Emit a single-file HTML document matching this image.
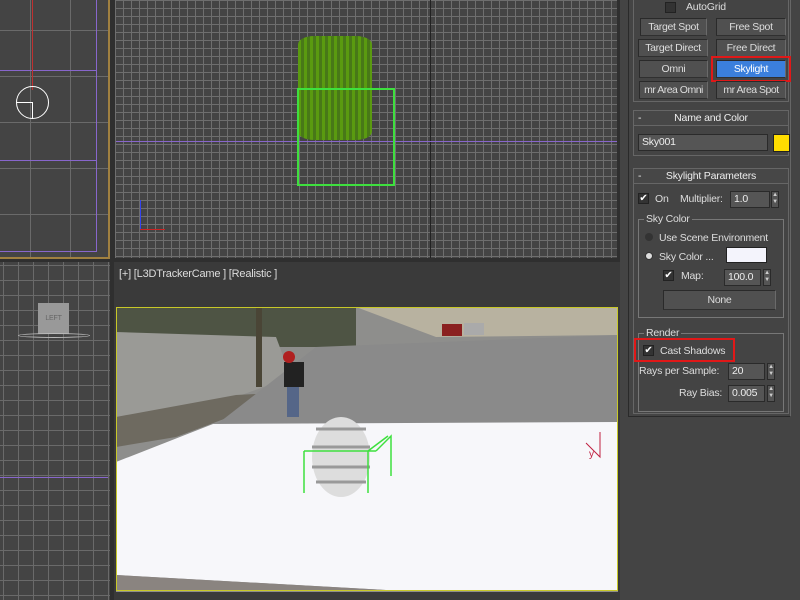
<!DOCTYPE html>
<html><head><style>
*{margin:0;padding:0;box-sizing:border-box}
body{width:800px;height:600px;overflow:hidden;background:#2f2f2f;font-family:"Liberation Sans",sans-serif;font-size:10.5px;letter-spacing:-0.2px;color:#ddd;position:relative;white-space:nowrap}
.a{position:absolute}
.grid{background-color:#444;background-image:linear-gradient(#6a6a6a 1px,transparent 1px),linear-gradient(90deg,#6a6a6a 1px,transparent 1px)}
.btn{position:absolute;height:18px;background:#505050;border:1px solid #2a2a2a;border-right-color:#6a6a6a;border-bottom-color:#303030;text-align:center;line-height:16px;color:#ddd;font-size:10.5px;letter-spacing:-0.3px;overflow:hidden}
.hdr{position:absolute;left:633px;width:156px;height:16px;border:1px solid #666;background:#474747;text-align:center;line-height:14px;color:#eee}
.hdr b{position:absolute;left:4px;font-weight:normal}
.fld{position:absolute;background:#555;border:1px solid #2a2a2a;height:17px;line-height:15px;padding-left:3px;color:#eee}
.cb{position:absolute;width:11px;height:11px;background:#333;border:1px solid #222;color:#fff;font-size:10px;line-height:9px;text-align:center}
.spin{position:absolute;width:8px;height:17px;background:#555;border:1px solid #2a2a2a;font-size:6px;line-height:7px;text-align:center;color:#ccc}
.grp{position:absolute;border:1px solid #777}
</style></head><body>
<!-- left top viewport -->
<div class="a grid" style="left:0;top:0;width:110px;height:259px;background-size:100% 46px,40px 100%;background-position:0 30px,-10px 0;border-right:2px solid #a08040;border-bottom:2px solid #a08040"></div>
<div class="a" style="left:0;top:70px;width:97px;height:1px;background:#8866cc"></div>
<div class="a" style="left:0;top:160px;width:97px;height:1px;background:#8866cc"></div>
<div class="a" style="left:96px;top:0;width:1px;height:252px;background:#8866cc"></div>
<div class="a" style="left:0;top:251px;width:97px;height:1px;background:#8866cc"></div>
<div class="a" style="left:32px;top:0;width:1px;height:90px;background:#c03030"></div>
<div class="a" style="left:16px;top:86px;width:33px;height:33px;border:1px solid #fff;border-radius:50%"></div>
<div class="a" style="left:32px;top:102px;width:1px;height:17px;background:#fff"></div>
<div class="a" style="left:17px;top:102px;width:16px;height:1px;background:#fff"></div>
<!-- top viewport -->
<div class="a grid" style="left:115px;top:0;width:502px;height:258px;background-size:8px 8px;background-image:linear-gradient(#6e6e6e 1px,transparent 1px),linear-gradient(90deg,#6e6e6e 1px,transparent 1px)"></div>
<div class="a" style="left:430px;top:0;width:1px;height:258px;background:#222"></div>
<div class="a" style="left:116px;top:141px;width:501px;height:1px;background:#8866cc"></div>
<div class="a" style="left:298px;top:36px;width:74px;height:104px;background:repeating-linear-gradient(90deg,#5a9a10 0 3px,#487818 3px 6px),#5a9a10;border-radius:22%/8%"></div>
<div class="a" style="left:297px;top:88px;width:98px;height:98px;border:2px solid #3ee03e"></div>
<div class="a" style="left:140px;top:200px;width:1px;height:30px;background:#3344ee"></div>
<div class="a" style="left:140px;top:229px;width:25px;height:1px;background:#cc2222"></div>
<!-- lower left viewport -->
<div class="a grid" style="left:0;top:262px;width:110px;height:338px;background-size:15px 15px;background-position:3px 3px"></div>
<div class="a" style="left:0;top:477px;width:108px;height:1px;background:#8866cc"></div>
<div class="a" style="left:38px;top:303px;width:31px;height:31px;background:#999;color:#666;font-size:7px;text-align:center;line-height:31px">LEFT</div>
<div class="a" style="left:18px;top:333px;width:72px;height:5px;border:1px solid #bbb;border-radius:50%"></div>
<!-- bottom viewport -->
<div class="a" style="left:114px;top:262px;width:506px;height:338px;background:#3a3a3a"></div>
<div class="a" style="left:119px;top:268px;color:#ddd;font-size:11px">[+] [L3DTrackerCame ] [Realistic ]</div>
<svg class="a" style="left:116px;top:307px" width="502" height="285" viewBox="0 0 502 285">
<rect x="0" y="0" width="502" height="285" fill="#8e8e8c"/>
<rect x="0" y="0" width="240" height="40" fill="#4e5444"/>
<polygon points="0,25 160,30 175,70 120,90 0,110" fill="#9a9a96"/>
<polygon points="0,110 120,88 180,85 60,130 0,140" fill="#6e6a60"/>
<polygon points="240,0 502,0 502,28 320,30" fill="#b8b2a0"/>
<polygon points="200,40 502,28 502,118 100,118" fill="#8a8a8a"/>
<rect x="140" y="0" width="6" height="80" fill="#4a4536"/>
<rect x="168" y="55" width="20" height="25" fill="#222"/>
<rect x="171" y="80" width="12" height="30" fill="#556688"/>
<circle cx="173" cy="50" r="6" fill="#b02020"/>
<rect x="326" y="17" width="20" height="12" fill="#8a2020"/>
<rect x="348" y="16" width="20" height="12" fill="#aaa"/>
<polygon points="0,155 97,117 502,115 502,283 270,283 0,268" fill="#f7f7fa"/>
<polygon points="0,268 270,283 0,283" fill="#8a8480"/>
<ellipse cx="225" cy="150" rx="29" ry="40" fill="#ddd"/>
<path d="M196 140h58M196 160h58M200 122h50M200 175h50" stroke="#999" stroke-width="3"/>
<path d="M188 144h72M188 144v42M252 144v42M260 144l15-15v40M252 144l20-15" stroke="#3ee03e" stroke-width="1.5" fill="none"/>
<path d="M470 136l14 14v-25" stroke="#c02040" fill="none"/>
<text x="473" y="150" fill="#c02040" font-size="10" font-family="Liberation Sans">y</text>
<rect x="0.5" y="0.5" width="501" height="283" fill="none" stroke="#c8c828"/>
</svg>
<div class="a" style="left:630px;top:560px;color:#f4f4f4;font-size:16px;font-family:'Liberation Sans','Noto Sans CJK SC',sans-serif;opacity:.85">@稀土掘金技术社区</div>
<!-- right panel -->
<div class="a" style="left:620px;top:0;width:180px;height:600px;background:#444"></div>
<div class="a" style="left:628px;top:-1px;width:163px;height:418px;border:1px solid #2a2a2a;border-right-color:#666"></div>
<div class="a" style="left:633px;top:-1px;width:156px;height:103px;border:1px solid #666"></div>
<div class="cb" style="left:665px;top:2px"></div>
<div class="a" style="left:686px;top:1px">AutoGrid</div>
<div class="btn" style="left:640px;top:18px;width:67px">Target Spot</div>
<div class="btn" style="left:716px;top:18px;width:70px">Free Spot</div>
<div class="btn" style="left:638px;top:39px;width:70px">Target Direct</div>
<div class="btn" style="left:716px;top:39px;width:70px">Free Direct</div>
<div class="btn" style="left:639px;top:60px;width:69px">Omni</div>
<div class="a" style="left:711px;top:56px;width:80px;height:26px;border:2px solid #e01818"></div>
<div class="btn" style="left:716px;top:60px;width:70px;background:#3b7fdc;color:#fff">Skylight</div>
<div class="btn" style="left:639px;top:81px;width:69px;letter-spacing:-0.5px">mr Area Omni</div>
<div class="btn" style="left:716px;top:81px;width:70px;letter-spacing:-0.5px">mr Area Spot</div>
<div class="hdr" style="top:110px"><b>-</b>Name and Color</div>
<div class="a" style="left:633px;top:126px;width:156px;height:30px;border:1px solid #666;border-top:none"></div>
<div class="fld" style="left:638px;top:134px;width:130px">Sky001</div>
<div class="a" style="left:773px;top:134px;width:17px;height:18px;background:#ffdd00;border:1px solid #222"></div>
<div class="hdr" style="top:168px"><b>-</b>Skylight Parameters</div>
<div class="a" style="left:633px;top:184px;width:156px;height:230px;border:1px solid #666;border-top:none"></div>
<div class="cb" style="left:638px;top:193px">✔</div>
<div class="a" style="left:655px;top:193px">On</div>
<div class="a" style="left:680px;top:193px">Multiplier:</div>
<div class="fld" style="left:730px;top:191px;width:40px">1.0</div>
<div class="spin" style="left:771px;top:191px">▲<br>▼</div>
<div class="grp" style="left:638px;top:219px;width:146px;height:99px"></div>
<div class="a" style="left:644px;top:213px;background:#444;padding:0 2px">Sky Color</div>
<div class="a" style="left:645px;top:233px;width:8px;height:8px;border-radius:50%;background:#333"></div>
<div class="a" style="left:659px;top:232px">Use Scene Environment</div>
<div class="a" style="left:645px;top:252px;width:8px;height:8px;border-radius:50%;background:#ddd;border:1px solid #333"></div>
<div class="a" style="left:659px;top:251px">Sky Color ...</div>
<div class="a" style="left:726px;top:247px;width:41px;height:16px;background:#f4f4fc;border:1px solid #222"></div>
<div class="cb" style="left:663px;top:270px">✔</div>
<div class="a" style="left:681px;top:270px">Map:</div>
<div class="fld" style="left:724px;top:269px;width:37px">100.0</div>
<div class="spin" style="left:763px;top:269px">▲<br>▼</div>
<div class="btn" style="left:663px;top:290px;width:113px;height:20px;line-height:18px">None</div>
<div class="grp" style="left:638px;top:333px;width:146px;height:79px"></div>
<div class="a" style="left:644px;top:327px;background:#444;padding:0 2px">Render</div>
<div class="a" style="left:634px;top:338px;width:101px;height:24px;border:2px solid #e01818"></div>
<div class="cb" style="left:643px;top:345px">✔</div>
<div class="a" style="left:660px;top:345px">Cast Shadows</div>
<div class="a" style="left:639px;top:365px">Rays per Sample:</div>
<div class="fld" style="left:728px;top:363px;width:37px">20</div>
<div class="spin" style="left:767px;top:363px">▲<br>▼</div>
<div class="a" style="left:679px;top:387px">Ray Bias:</div>
<div class="fld" style="left:728px;top:385px;width:37px">0.005</div>
<div class="spin" style="left:767px;top:385px">▲<br>▼</div>
</body></html>
